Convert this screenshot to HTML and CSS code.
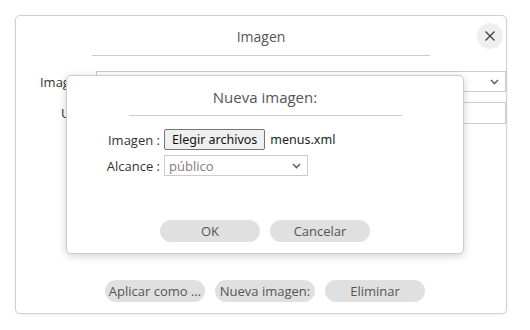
FILE: index.html
```html
<!DOCTYPE html>
<html lang="es">

<head>
  <meta charset="UTF-8" />
  <title>Imagen</title>
  <link rel="stylesheet" href="styles.css">
</head>

<body>
  <div class="dialog">
    <h3 class="dialog-title">Imagen</h3>
    <button class="close-btn" title="Cerrar">
      <svg width="14" height="14" viewBox="0 0 14 14">
        <path d="M2.5 2.5 L11.5 11.5 M11.5 2.5 L2.5 11.5" stroke="#444" stroke-width="1.4" fill="none" />
      </svg>
    </button>
    <hr class="rule">
    <div class="form-row">
      <label>Imagen :</label>
      <div class="select-box wide">
        <span></span>
        <svg class="chevron" width="9" height="6" viewBox="0 0 9 6">
          <path d="M1 1 L4.5 4.5 L8 1" stroke="#666" stroke-width="1.6" fill="none" />
        </svg>
      </div>
    </div>
    <div class="form-row">
      <label>URL :</label>
      <div class="text-box"></div>
    </div>
    <div class="actions shifted">
      <button class="pill">Aplicar como ...</button>
      <button class="pill">Nueva imagen:</button>
      <button class="pill">Eliminar</button>
    </div>
  </div>

  <div class="dialog inner">
    <h3 class="dialog-title big">Nueva imagen:</h3>
    <hr class="rule short">
    <div class="inner-form">
      <label>Imagen :</label>
      <div class="file-field">
        <button class="file-btn">Elegir archivos</button>
        <span class="file-name">menus.xml</span>
      </div>
      <label>Alcance :</label>
      <div class="select-box small">
        <span class="muted">público</span>
        <svg class="chevron" width="9" height="6" viewBox="0 0 9 6">
          <path d="M1 1 L4.5 4.5 L8 1" stroke="#666" stroke-width="1.6" fill="none" />
        </svg>
      </div>
    </div>
    <div class="actions">
      <button class="pill">OK</button>
      <button class="pill">Cancelar</button>
    </div>
  </div>
</body>

</html>
```

FILE: styles.css
```css
body {
  margin: 0;
  padding: 15px;
  background-color: #fff;
  font-family: 'Open Sans', sans-serif;
  font-size: 13px;
  color: #333;
}

.dialog {
  position: relative;
  width: 490px;
  height: 297px;
  display: flex;
  flex-direction: column;
  border: 1px solid #d0d0d0;
  border-radius: 5px;
  background-color: #fff;
  box-shadow: 0px 1px 3px 0px rgba(0, 0, 0, 0.08);
}

.dialog-title {
  margin: 11px 0 0;
  font-size: 14px;
  font-weight: 400;
  line-height: 20px;
  text-align: center;
  color: #555;
}

.dialog-title.big {
  font-size: 15px;
}

.close-btn {
  position: absolute;
  top: 7px;
  right: 3px;
  width: 26px;
  height: 26px;
  padding: 0;
  border: none;
  border-radius: 50%;
  background-color: #efefef;
  display: flex;
  align-items: center;
  justify-content: center;
}

.rule {
  width: 338px;
  margin: 8px auto 0;
  border: none;
  border-top: 1px solid #ccc;
}

.rule.short {
  width: 273px;
}

.form-row {
  display: grid;
  grid-template-columns: 76px 1fr;
  column-gap: 4px;
  align-items: center;
  margin-top: 15px;
}

.form-row+.form-row {
  margin-top: 10px;
}

.form-row label,
.inner-form label {
  text-align: right;
  white-space: nowrap;
}

.select-box,
.text-box {
  height: 19px;
  border: 1px solid #ccc;
  background-color: #fff;
  display: flex;
  align-items: center;
  justify-content: space-between;
  padding: 0 6px;
}

.text-box {
  height: 20px;
}

.chevron {
  flex: none;
}

.actions {
  margin-top: auto;
  margin-bottom: 11px;
  display: flex;
  justify-content: center;
  gap: 10px;
}

.actions.shifted {
  padding-left: 8px;
}

.pill {
  width: 100px;
  height: 22px;
  padding: 0 2px;
  border: none;
  border-radius: 11px;
  background-color: #e0e0e0;
  font-family: 'Open Sans', sans-serif;
  font-size: 13px;
  color: #555;
  white-space: nowrap;
}

.dialog.inner {
  position: absolute;
  top: 75px;
  left: 66px;
  width: 396px;
  height: 177px;
  border-color: #ccc;
  box-shadow: 0px 2px 8px 0px rgba(0, 0, 0, 0.18);
}

.inner-form {
  display: grid;
  grid-template-columns: 93px auto;
  column-gap: 4px;
  row-gap: 5px;
  align-items: center;
  justify-content: start;
  margin-top: 13px;
}

.file-field {
  display: flex;
  align-items: center;
  gap: 5px;
}

.file-btn {
  height: 21px;
  padding: 0 7px;
  border: 1px solid #767676;
  border-radius: 2px;
  background-color: #efefef;
  font-family: 'Noto Sans', sans-serif;
  font-size: 12.5px;
  color: #111;
}

.file-name {
  font-family: 'Noto Sans', sans-serif;
  font-size: 12.5px;
  color: #222;
}

.select-box.small {
  width: 132px;
  height: 19px;
  padding: 0 6px 0 4px;
}

.muted {
  color: #8a7a7a;
}
```
